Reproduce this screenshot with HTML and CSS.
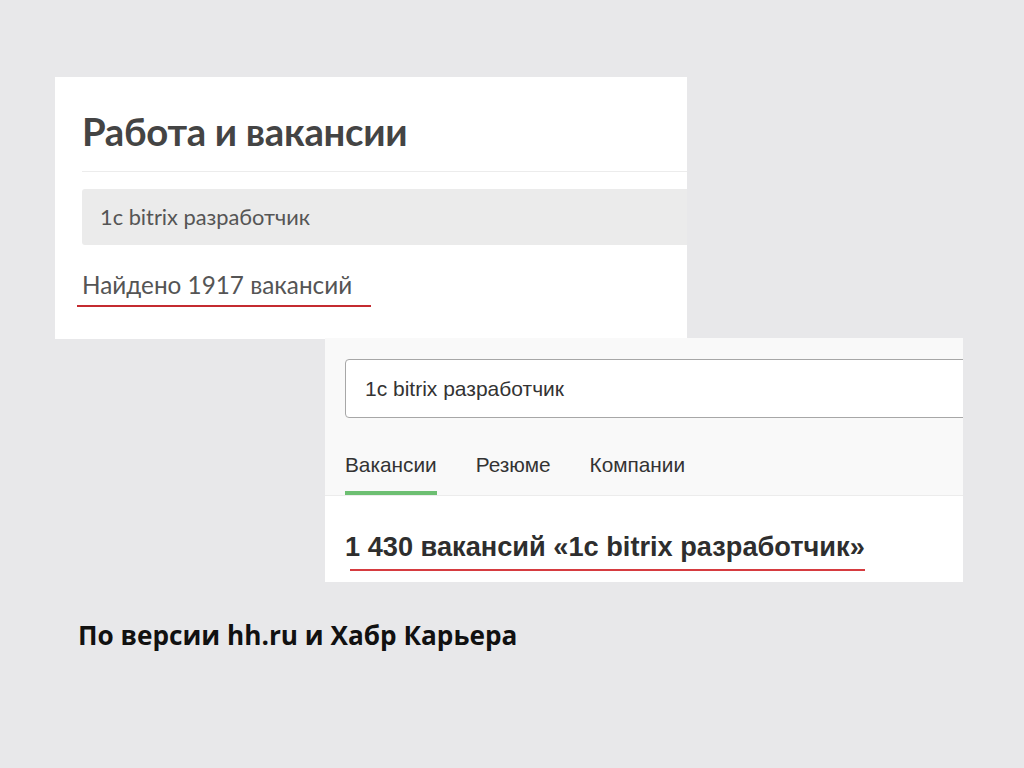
FILE: index.html
```html
<!DOCTYPE html>
<html lang="ru">
<head>
<meta charset="utf-8">
<link rel="stylesheet" href="styles.css">
</head>
<body>
<div class="page">
  <section class="card card-habr">
    <div class="habr-inner">
      <h1 class="habr-title">Работа и вакансии</h1>
      <div class="habr-sep"></div>
      <div class="habr-search">1с bitrix разработчик</div>
      <div class="habr-found"><span class="mark-habr">Найдено 1917 вакансий</span></div>
    </div>
  </section>
  <section class="card card-hh">
    <div class="hh-top">
      <div class="hh-input">1с bitrix разработчик</div>
      <nav class="hh-tabs">
        <span class="hh-tab active">Вакансии</span>
        <span class="hh-tab">Резюме</span>
        <span class="hh-tab">Компании</span>
      </nav>
    </div>
    <div class="hh-result"><span class="mark-hh">1 430 вакансий «1с bitrix разработчик»</span></div>
  </section>
  <p class="caption">По версии hh.ru и Хабр Карьера</p>
</div>
</body>
</html>
```

FILE: styles.css
```css
html, body {
  margin: 0;
  padding: 0;
  background: #e8e8ea;
}
.page {
  width: 1024px;
  height: 768px;
  overflow: hidden;
  display: flex;
  flex-direction: column;
  align-items: flex-start;
}
.card {
  background: #ffffff;
  overflow: hidden;
  box-sizing: border-box;
}
.card-habr {
  margin: 77px 0 0 55px;
  width: 632px;
  height: 262px;
}
.habr-inner {
  margin-left: 27px;
  padding-top: 30px;
}
.habr-title {
  margin: 0;
  font-family: "Lato", sans-serif;
  font-weight: 700;
  font-size: 38.3px;
  line-height: 48px;
  color: #444;
  letter-spacing: -0.3px;
}
.habr-sep {
  height: 1px;
  background: #ececec;
  margin-top: 16px;
}
.habr-search {
  margin-top: 17px;
  height: 56px;
  background: #ebebeb;
  border-radius: 3px 0 0 3px;
  padding-left: 18px;
  font-family: "Lato", sans-serif;
  font-size: 21.8px;
  line-height: 56px;
  color: #555;
}
.habr-found {
  margin-top: 26px;
  font-family: "Lato", sans-serif;
  font-size: 24.3px;
  line-height: 28px;
  color: #555;
}
.mark-habr {
  display: inline-block;
  position: relative;
}
.mark-habr::after {
  content: "";
  position: absolute;
  left: -5px;
  right: -19px;
  bottom: -8px;
  height: 2px;
  background: #c42b30;
}
.card-hh {
  margin: -1px 0 0 325px;
  width: 638px;
  height: 244px;
}
.hh-top {
  background: #f9f9f9;
  padding: 21px 0 0 20px;
  border-bottom: 1px solid #ececec;
}
.hh-input {
  width: 700px;
  height: 59px;
  box-sizing: border-box;
  border: 1px solid #a7a7a7;
  border-radius: 4px;
  background: #fff;
  padding-left: 19px;
  font-family: "Liberation Sans", Arial, sans-serif;
  font-size: 21px;
  line-height: 57px;
  color: #333;
}
.hh-tabs {
  display: flex;
  gap: 39px;
  margin-top: 33px;
}
.hh-tab {
  font-family: "Liberation Sans", Arial, sans-serif;
  font-size: 20.8px;
  line-height: 28px;
  color: #333;
  padding-bottom: 12px;
  border-bottom: 4px solid transparent;
}
.hh-tab.active {
  border-bottom-color: #6dbf72;
}
.hh-result {
  padding: 36px 0 0 20px;
  font-family: "Liberation Sans", Arial, sans-serif;
  font-weight: 700;
  font-size: 27.2px;
  line-height: 30px;
  color: #2e2e2e;
}
.mark-hh {
  display: inline-block;
  position: relative;
}
.mark-hh::after {
  content: "";
  position: absolute;
  left: 5px;
  right: 0;
  bottom: -9px;
  height: 2px;
  background: #d63b40;
}
.caption {
  margin: 37px 0 0 78px;
  font-family: "Open Sans", sans-serif;
  font-weight: 700;
  font-size: 26.2px;
  line-height: 32px;
  color: #111;
}
```
